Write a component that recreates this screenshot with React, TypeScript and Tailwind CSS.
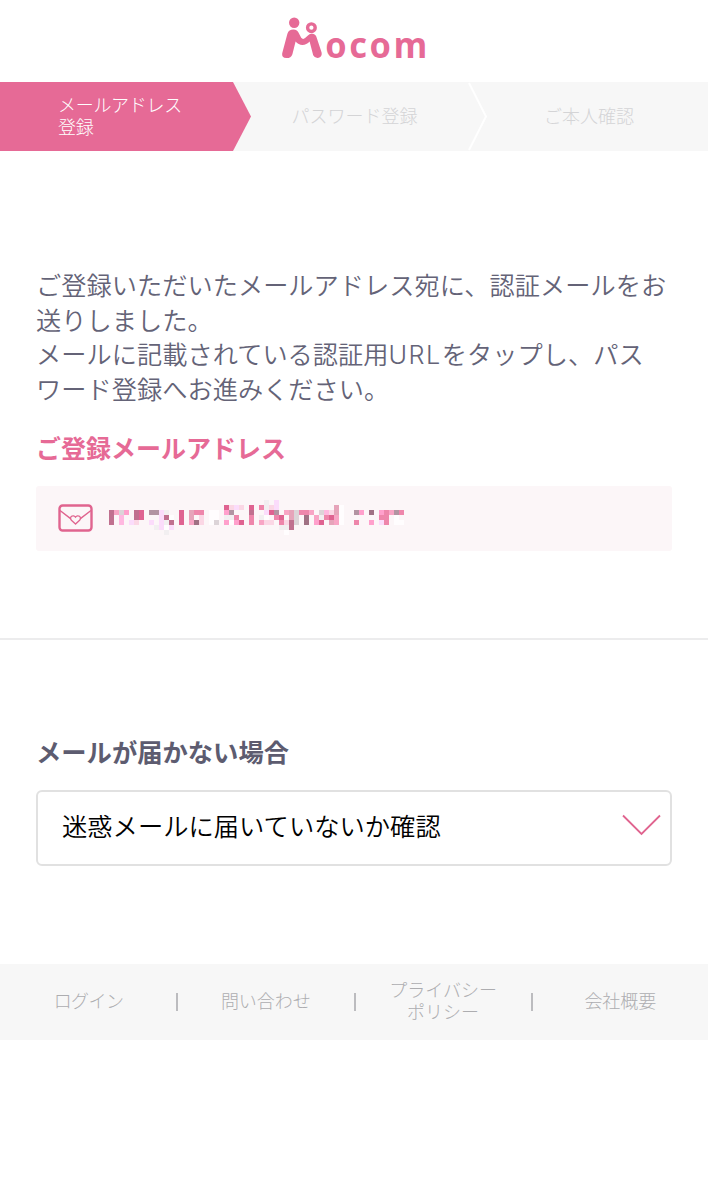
import React from "react";

const JP = "font-['Liberation_Sans','Noto_Sans_CJK_JP',sans-serif]";

function Logo() {
  return (
    <svg width="170" height="64" viewBox="0 0 170 64" className="text-[#e66a96]" aria-label="Mocom">
      <g transform="translate(-269 -13)" fill="currentColor">
        <circle cx="294.2" cy="22.8" r="5.2" />
        <circle cx="311.4" cy="27.7" r="3.8" fill="none" stroke="currentColor" strokeWidth="3.4" />
        <path d="M282.2 53.2 L287.4 33.8 Q288.8 29.6 293.4 29.6 Q297.4 29.7 299 33.4 L301.2 37.8 Q303 40 305.4 37.8 L308.2 35.2 Q310.2 33.4 312.8 33.8 Q315.8 34.4 316.8 38 L321.6 52.6 Q322.4 56.6 318.8 57.8 Q315 58.6 313.2 55.2 L309.6 41.6 Q306.6 44.9 302.4 45 Q298.4 45 295.6 41.6 L292.4 54.2 Q291 58.2 286.4 58.1 Q281.4 57.6 282.2 53.2 Z" />
        <text
          transform="translate(325.2 58.3) scale(0.94 1)"
          fontSize="36.5"
          fontWeight="700"
          letterSpacing="2.8"
          className="font-['Noto_Sans',sans-serif]"
        >
          ocom
        </text>
      </g>
    </svg>
  );
}

function Steps() {
  return (
    <ol className="flex h-[69px] bg-[#f7f7f7] text-[18px] leading-[22px] font-light text-[#d4d4d6]">
      <li className="flex w-[251px] items-center bg-[#e66a96] pl-[58px] text-white [clip-path:polygon(0_0,233px_0,251px_50%,233px_100%,0_100%)]">
        <span className="tracking-[-0.3px]">
          メールアドレス
          <br />
          登録
        </span>
      </li>
      <li className="flex w-[207px] items-center justify-center">パスワード登録</li>
      <li className="flex w-[30px]">
        <svg width="30" height="69" viewBox="0 0 30 69" fill="none">
          <path d="M11 1 L28 34.5 L11 68" stroke="#fff" strokeWidth="2" />
        </svg>
      </li>
      <li className="flex flex-1 items-center pl-[56px]">ご本人確認</li>
    </ol>
  );
}

const PALETTE: Record<string, string> = {
  D: "#c0708f",
  K: "#df6391",
  P: "#ee86ab",
  p: "#f8a5c5",
  M: "#ffa0cc",
  B: "#ffb8e0",
  b: "#e6a4ba",
  L: "#fbd7e5",
  V: "#fbdcfb",
  G: "#b294a2",
  g: "#dcd4d8",
  N: "#a07184",
  e: "#f2eff1",
  w: "#fffdfe",
};

// Each token is a palette letter followed by the column it fills.
const MOSAIC_ROWS = [
  "e31 V33",
  "K23 L24 V25 L26 K28 P30 e31 L32 V33 b45 w46",
  "D0 p1 g2 M3 D5 K6 G8 G9 V10 e11 K14 b16 P17 P18 w20 w21 M23 G24 D28 V31 K32 G33 p35 b36 g37 P38 P39 p40 g42 B43 L44 b45 w46 G49 M50 N52 M54 P55 p56 G57 P58",
  "D0 B2 D5 K6 V10 D11 w12 K14 b16 L18 w20 w21 e23 e24 P25 P28 e30 w31 P33 K34 b36 g37 N39 p41 e42 P43 K44 p45 w46 P54 P55 w57",
  "D0 B2 V4 L5 V8 V10 e11 D12 K14 p16 N17 L18 w20 g21 M23 w24 M25 K26 P28 p30 L31 L32 P34 L35 D36 g37 N39 M41 K42 b44 p45 w46 P49 M52 V54 P55 w57 w58",
  "e9 V10 w11 V12 e34 e35 D36",
  "e11 w35",
];

function MaskedAddress() {
  return (
    <svg width="300" height="35" viewBox="0 0 300 35" shapeRendering="crispEdges">
      {MOSAIC_ROWS.flatMap((spec, y) =>
        spec.split(" ").map((token) => {
          const x = Number(token.slice(1));
          return (
            <rect key={`${x}-${y}`} x={x * 5} y={y * 5} width="5" height="5" fill={PALETTE[token[0]]} />
          );
        })
      )}
    </svg>
  );
}

function MailIcon() {
  return (
    <svg width="35" height="28" viewBox="0 0 35 28" fill="none" stroke="#e0648f">
      <rect x="1.5" y="1.5" width="32" height="25" rx="3.2" strokeWidth="2.4" />
      <path d="M2 6.5 L12.6 14.6 M33 6.5 L22.4 14.6" strokeWidth="1.4" />
      <path
        d="M17.5 20 L13.4 16.2 C10.8 13.2 15 9.8 17.5 13.2 C20 9.8 24.2 13.2 21.6 16.2 Z"
        strokeWidth="1.3"
      />
    </svg>
  );
}

function Footer() {
  const cell = "flex flex-1 items-center justify-center text-center";
  const bar = "h-[18px] w-[2px] bg-[#bcbcbf]";
  return (
    <footer className="mt-[98px] flex h-[76px] items-center bg-[#f7f7f7] pl-px text-[18px] leading-[22px] font-light text-[#adadb0]">
      <a className={cell}>
        <span className="tracking-[-0.5px]">ログイン</span>
      </a>
      <i className={bar} />
      <a className={cell}>問い合わせ</a>
      <i className={bar} />
      <a className={cell}>
        プライバシー
        <br />
        ポリシー
      </a>
      <i className={bar} />
      <a className={cell}>会社概要</a>
    </footer>
  );
}

export default function App() {
  return (
    <div className={`min-h-[1200px] w-[708px] bg-white ${JP}`}>
      <header className="flex h-[82px] justify-center pt-[13px]">
        <Logo />
      </header>
      <Steps />

      <section className="border-b-2 border-[#ececed] px-9 pt-[118px] pb-[87px]">
        <p className="text-[25.2px] leading-[34.6px] font-[350] tracking-[0.05px] whitespace-nowrap text-[#646377]">
          ご登録いただいたメールアドレス宛に、認証メールをお
          <br />
          送りしました。
          <br />
          メールに記載されている認証用
          <span className="font-['Inter',sans-serif] font-light tracking-[1.5px]">URL</span>
          をタップし、パス
          <br />
          ワード登録へお進みください。
        </p>
        <h2 className="mt-[25px] text-[25px] leading-[35px] font-bold text-[#e66a96]">
          ご登録メールアドレス
        </h2>
        <div className="mt-[19px] flex h-[65px] items-start rounded-[3px] bg-[#fcf6f8] pt-[14px] pl-[22px]">
          <div className="pt-[4px]">
            <MailIcon />
          </div>
          <div className="ml-4">
            <MaskedAddress />
          </div>
        </div>
      </section>

      <section className="px-9 pt-[96px]">
        <h2 className="text-[25.3px] leading-[35px] font-bold text-[#5d5c70]">メールが届かない場合</h2>
        <button className="mt-[19px] flex h-[76px] w-[636px] items-center justify-between rounded-[6px] border-2 border-[#e1e1e1] bg-white pr-[8px] pl-[24px] text-[25.3px] text-black">
          <span className="font-[350]">迷惑メールに届いていないか確認</span>
          <svg width="40" height="22" viewBox="0 0 40 22" fill="none" className="-mt-[7px]">
            <path d="M1 1.5 L19.5 20 L38 1.5" stroke="#e0648f" strokeWidth="1.8" />
          </svg>
        </button>
      </section>

      <Footer />
    </div>
  );
}
